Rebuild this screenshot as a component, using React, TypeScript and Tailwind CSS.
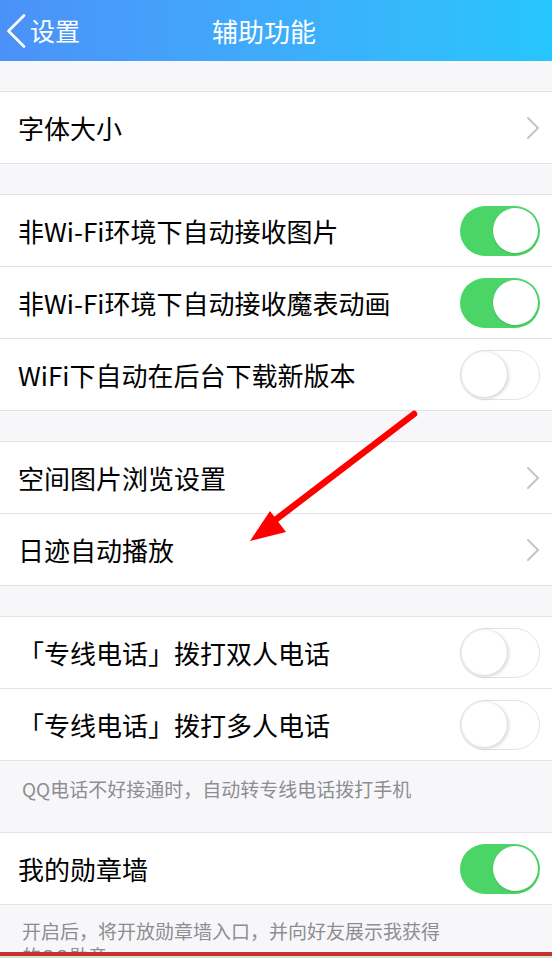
import type { ReactNode } from "react";

type Row = {
  label: string;
  kind: "link" | "on" | "off";
};

const groups: { rows: Row[]; footer?: string }[] = [
  { rows: [{ label: "字体大小", kind: "link" }] },
  {
    rows: [
      { label: "非Wi-Fi环境下自动接收图片", kind: "on" },
      { label: "非Wi-Fi环境下自动接收魔表动画", kind: "on" },
      { label: "WiFi下自动在后台下载新版本", kind: "off" },
    ],
  },
  {
    rows: [
      { label: "空间图片浏览设置", kind: "link" },
      { label: "日迹自动播放", kind: "link" },
    ],
  },
  {
    rows: [
      { label: "「专线电话」拨打双人电话", kind: "off" },
      { label: "「专线电话」拨打多人电话", kind: "off" },
    ],
    footer: "QQ电话不好接通时，自动转专线电话拨打手机",
  },
  {
    rows: [{ label: "我的勋章墙", kind: "on" }],
    footer: "开启后，将开放勋章墙入口，并向好友展示我获得的QQ勋章",
  },
];

export default function App() {
  return (
    <div
      className="relative h-[958px] w-[552px] overflow-hidden bg-[#f7f7f9]"
      style={{ fontFamily: '"Noto Sans CJK SC", "Noto Sans", sans-serif' }}
    >
      <Header />

      {groups.map((group, gi) => (
        <div key={gi}>
          {!(gi > 0 && groups[gi - 1].footer) && (
            <div className="h-[31px] border-b border-[#e2e2e5]" />
          )}
          {group.rows.map((row) => (
            <SettingRow key={row.label} row={row} />
          ))}
          {group.footer && (
            <Footer tall={gi === groups.length - 1}>{group.footer}</Footer>
          )}
        </div>
      ))}

      <Arrow />

      <div className="absolute bottom-[2px] left-0 h-[4px] w-full bg-[#c8312f]" />
      <div className="absolute bottom-0 left-0 h-[2px] w-full bg-[#cfe8cf]" />
    </div>
  );
}

function Header() {
  return (
    <div className="relative flex h-[61px] items-center justify-center bg-gradient-to-r from-[#4b91f8] to-[#26c6fd] pr-[24px] text-white">
      <div className="absolute left-[6px] top-0 flex h-full items-center">
        <svg width="20" height="34" viewBox="0 0 20 34" fill="none">
          <polyline
            points="18,1.5 2.5,17 18,32.5"
            stroke="white"
            strokeWidth="2.6"
            strokeLinecap="round"
            strokeLinejoin="round"
          />
        </svg>
        <span className="ml-[4px] text-[25px] leading-none">设置</span>
      </div>
      <h1 className="text-[26px] leading-none">辅助功能</h1>
    </div>
  );
}

function SettingRow({ row }: { row: Row }) {
  return (
    <div className="flex h-[72px] items-center justify-between border-b border-[#e2e2e5] bg-white pl-[18px] pr-[12px]">
      <span className="text-[26px] leading-none text-black">{row.label}</span>
      {row.kind === "link" ? <Chevron /> : <Toggle on={row.kind === "on"} />}
    </div>
  );
}

function Chevron() {
  return (
    <svg width="14" height="24" viewBox="0 0 14 24" fill="none">
      <polyline
        points="2,2 12,12 2,22"
        stroke="#c4c4c9"
        strokeWidth="2"
        strokeLinecap="round"
        strokeLinejoin="round"
      />
    </svg>
  );
}

function Toggle({ on }: { on: boolean }) {
  if (on) {
    return (
      <div className="flex h-[50px] w-[80px] items-center justify-end rounded-full bg-[#4cd567] pr-[2px]">
        <div className="h-[45px] w-[45px] rounded-full bg-white shadow-[0_1px_2px_rgba(0,0,0,0.15)]" />
      </div>
    );
  }
  return (
    <div className="flex h-[50px] w-[80px] items-center justify-start rounded-full border-[1.5px] border-[#e3e3e6] bg-white pl-[1px]">
      <div className="h-[45px] w-[45px] rounded-full bg-white shadow-[1px_1px_4px_rgba(0,0,0,0.22)]" />
    </div>
  );
}

function Footer({ children, tall }: { children: ReactNode; tall?: boolean }) {
  return (
    <div
      className={
        tall
          ? "pl-[22px] pt-[13px] text-[19px] leading-[25px] text-[#8d8d92]"
          : "h-[72px] border-b border-[#e2e2e5] pl-[22px] pt-[15px] text-[19px] leading-[26px] text-[#8d8d92]"
      }
    >
      <p className="max-w-[435px]">{children}</p>
    </div>
  );
}

function Arrow() {
  return (
    <svg
      className="pointer-events-none absolute left-0 top-0"
      width="552"
      height="958"
      viewBox="0 0 552 958"
    >
      <line
        x1="414"
        y1="414"
        x2="270"
        y2="524"
        stroke="#ff0000"
        strokeWidth="6.5"
        strokeLinecap="round"
      />
      <polygon points="250,541 270,511 286,532" fill="#ff0000" />
    </svg>
  );
}
